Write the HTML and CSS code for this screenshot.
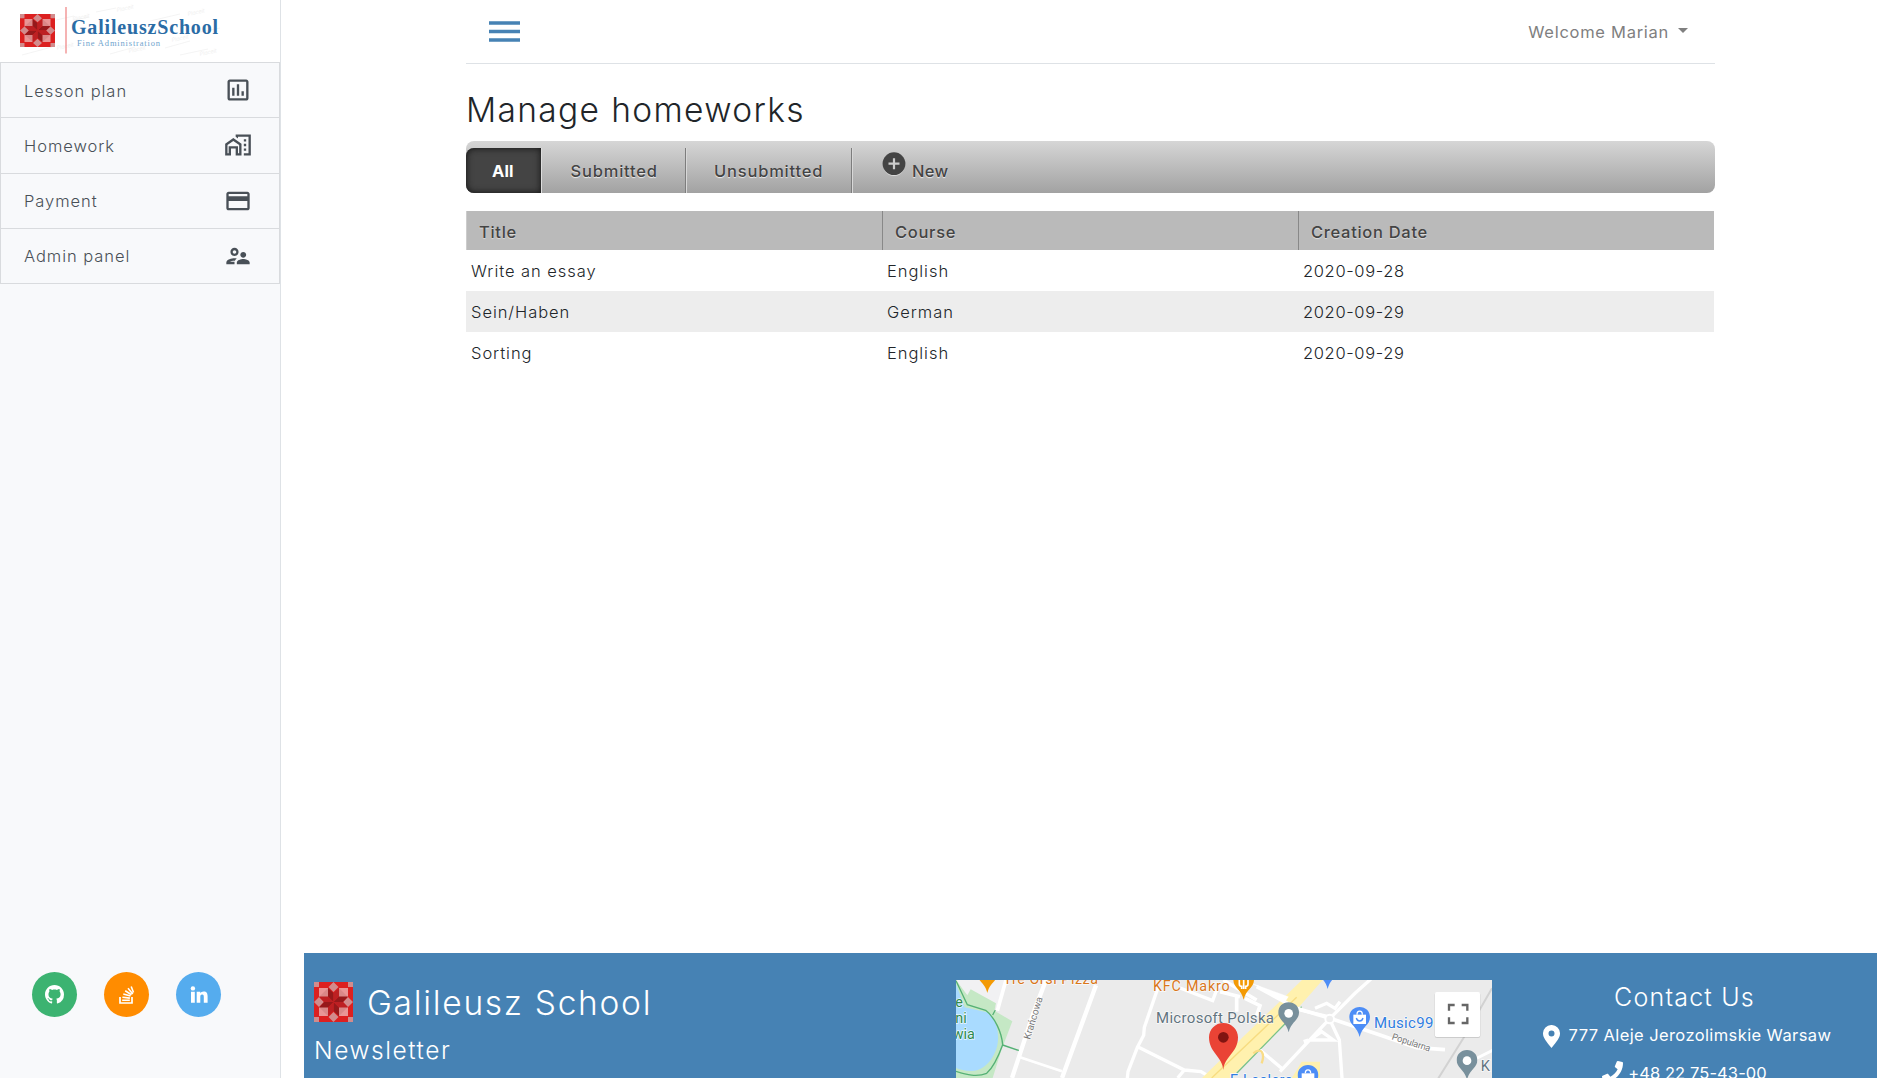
FILE: index.html
```html
<!DOCTYPE html>
<html lang="en">
<head>
<meta charset="utf-8">
<title>Galileusz School</title>
<link rel="stylesheet" href="styles.css">
</head>
<body>
<svg class="defs" width="0" height="0">
  <defs>
    <symbol id="emblem" viewBox="0 0 39 40" preserveAspectRatio="none">
      <rect width="39" height="40" fill="#dc2020"/>
      <g fill="#d28b8c">
        <path d="M0 0h5v5H0zM34 0h5v5h-5zM0 35h5v5H0zM34 35h5v5h-5z"/>
        <path d="M19.500 0l5 5-5 5-5-5zM19.500 30l5 5-5 5-5-5zM0 20l5-5 5 5-5 5zM29 20l5-5 5 5-5 5z"/>
      </g>
      <path d="M5 6h9v9H5zM25 6h9v9h-9zM5 25h9v9H5zM25 25h9v9h-9z" fill="#e99595"/>
      <path d="M5 15h9V6zM34 15h-9V6zM5 25h9v9zM34 25h-9v9z" fill="#d98787"/>
      <path d="M19.500 20L14 14.500V6l5.500 5zM19.500 20L25 14.500h9L29 20zM19.500 20l5.500 5.500V34l-5.500-5zM19.500 20L14 25.500H5l5-5.500z" fill="#96191b"/>
      <path d="M19.500 20L25 14.500V6l-5.500 5zM19.500 20l5.500 5.500h9L29 20zM19.500 20L14 25.500V34l5.500-5zM19.500 20L14 14.500H5l5 5.500z" fill="#bd2023"/>
    </symbol>
    <symbol id="pin" viewBox="0 0 64 92">
      <path d="M32 1C14 1 1 14 1 31c0 25 24 28 31 60 7-32 31-35 31-60C63 14 50 1 32 1z"/>
    </symbol>
  </defs>
</svg>
<div class="page">
  <aside class="sidebar">
    <a class="brand">
      <svg width="240" height="62" viewBox="0 0 240 62">
        <g stroke="#f1f1f1" stroke-width=".8">
          <path d="M56 20l18-4M96 12l20-4M150 21l30-7M22 55l30-8M110 54l25-7M165 48l25-7M180 55l28-6M74 20l15-3M200 32l20-4"/>
        </g>
        <g fill="#ececec" font-family="Inter, sans-serif" font-size="5.500" font-style="italic" letter-spacing="0">
          <text x="73" y="21" transform="rotate(-12 73 21)">Placeit</text>
          <text x="117" y="12" transform="rotate(-12 117 12)">Placeit</text>
          <text x="188" y="16" transform="rotate(-12 188 16)">Placeit</text>
          <text x="57" y="50" transform="rotate(-12 57 50)">Placeit</text>
          <text x="129" y="53" transform="rotate(-12 129 53)">Placeit</text>
          <text x="172" y="42" transform="rotate(-12 172 42)">Placeit</text>
          <text x="200" y="56" transform="rotate(-12 200 56)">Placeit</text>
        </g>
        <use href="#emblem" x="20" y="14" width="35" height="33"/>
        <path d="M66 7v46.500" stroke="#f08a8a" stroke-width="1.300"/>
        <text class="brand-name" x="71" y="34" textLength="147">GalileuszSchool</text>
        <text class="brand-sub" x="77" y="46" textLength="83">Fine Administration</text>
      </svg>
    </a>
    <nav class="menu">
      <a class="menu-item"><span>Lesson plan</span>
        <svg class="icon" viewBox="0 0 24 24"><path d="M9 17H7v-7h2zM13 17h-2V7h2zM17 17h-2v-4h2zM19 19H5V5h14zM19 3H5c-1.100 0-2 .9-2 2v14c0 1.100.9 2 2 2h14c1.100 0 2-.9 2-2V5c0-1.100-.9-2-2-2z" fill-rule="evenodd"/></svg></a>
      <a class="menu-item"><span>Homework</span>
        <svg class="icon" viewBox="0 0 24 24"><path d="M1 11v10h5v-6h4v6h5V11L8 6zm12 8h-1v-6H4v6H3v-7l5-3.500 5 3.500z"/><path d="M17 7h2v2h-2zM17 11h2v2h-2zM17 15h2v2h-2z"/><path d="M10 3v1.970l2 1.430V5h9v14h-4v2h6V3z"/></svg></a>
      <a class="menu-item"><span>Payment</span>
        <svg class="icon" viewBox="0 0 24 24"><path d="M20 4H4c-1.110 0-1.990.89-1.990 2L2 18c0 1.110.89 2 2 2h16c1.110 0 2-.89 2-2V6c0-1.110-.89-2-2-2zm0 14H4v-6h16v6zm0-10H4V6h16v2z"/></svg></a>
      <a class="menu-item"><span>Admin panel</span>
        <svg class="icon" viewBox="0 0 24 24"><path d="M9 12c1.930 0 3.500-1.570 3.500-3.500S10.930 5 9 5 5.500 6.570 5.500 8.500 7.070 12 9 12zm0-5c.83 0 1.500.67 1.500 1.500S9.830 10 9 10s-1.500-.67-1.500-1.500S8.170 7 9 7zm.05 10H4.770c.99-.5 2.700-1 4.230-1 .11 0 .23.010.34.010.34-.73.930-1.330 1.640-1.810-.73-.13-1.420-.2-1.980-.2-2.340 0-7 1.170-7 3.500V19h7v-1.500c0-.17.020-.34.050-.5zm7.450-2.500c-1.840 0-5.500 1.010-5.500 3V19h11v-1.500c0-1.990-3.660-3-5.500-3zm0-1c1.380 0 2.500-1.120 2.500-2.500s-1.120-2.500-2.500-2.500S14 9.620 14 11s1.120 2.500 2.500 2.500z"/></svg></a>
    </nav>
    <div class="social">
      <a class="round github"><svg width="19" height="19" viewBox="0 0 16 16"><path d="M8 0C3.580 0 0 3.580 0 8c0 3.540 2.290 6.530 5.470 7.590.4.070.55-.17.55-.38 0-.19-.01-.82-.01-1.490-2.010.37-2.530-.49-2.690-.94-.09-.23-.48-.94-.82-1.130-.28-.15-.68-.52-.01-.53.63-.01 1.080.58 1.230.82.72 1.210 1.870.87 2.330.66.070-.52.280-.87.510-1.070-1.780-.2-3.640-.89-3.640-3.950 0-.87.310-1.590.820-2.150-.08-.2-.36-1.020.080-2.120 0 0 .67-.21 2.200.82.640-.18 1.320-.27 2-.27.680 0 1.360.090 2 .27 1.530-1.040 2.200-.82 2.200-.82.440 1.100.160 1.920.080 2.120.510.560.820 1.270.820 2.150 0 3.070-1.870 3.750-3.650 3.950.290.250.540.730.540 1.480 0 1.070-.01 1.930-.01 2.200 0 .210.150.460.550.380A8.013 8.013 0 0016 8c0-4.420-3.580-8-8-8z"/></svg></a>
      <a class="round stack"><svg width="16" height="18" viewBox="0 0 16 18"><path d="M1 11v6h12v-6" fill="none" stroke="#fff" stroke-width="1.700"/><path d="M3.200 14.300h7.600M3.400 11.300l7.500.8M4.300 8l7.200 2M6.200 4.800l6.300 4M9 2.200l4.800 5.700M12.200.5l2.300 6" stroke="#fff" stroke-width="1.600" fill="none"/></svg></a>
      <a class="round linkedin"><svg width="18" height="18" viewBox="0 0 18 18"><circle cx="2.900" cy="2.400" r="2.200"/><path d="M1 5.700h3.800v11H1zM6.700 5.700h3.600v1.500c.6-1 1.700-1.800 3.300-1.800 3.200 0 4 2 4 4.900v6.400h-3.800v-5.500c0-1.300-.1-2.700-1.700-2.700s-1.800 1.300-1.800 2.700v5.500H6.700z"/></svg></a>
    </div>
  </aside>

  <div class="content">
    <main class="container">
      <header class="topbar">
        <svg width="31" height="22" viewBox="0 0 31 22"><path d="M0 2h31M0 10.500h31M0 19h31" stroke="#4682b4" stroke-width="3.600"/></svg>
        <a class="welcome">Welcome Marian<i class="caret"></i></a>
      </header>
      <h2 class="title">Manage homeworks</h2>
      <ul class="tabs">
        <li class="tab active">All</li>
        <li class="tab submitted">Submitted</li>
        <li class="tab unsubmitted">Unsubmitted</li>
        <li class="tab new"><svg width="24" height="24" viewBox="0 0 24 24"><circle cx="12" cy="13" r="11" fill="#ddd"/><circle cx="12" cy="11.700" r="11.400" fill="#444"/><path d="M6.500 11.700h11M12 6.200v11" stroke="#ccc" stroke-width="2.200"/></svg>New</li>
      </ul>
      <table class="grid">
        <thead><tr><th>Title</th><th>Course</th><th>Creation Date</th></tr></thead>
        <tbody>
          <tr><td>Write an essay</td><td>English</td><td class="date">2020-09-28</td></tr>
          <tr><td>Sein/Haben</td><td>German</td><td class="date">2020-09-29</td></tr>
          <tr><td>Sorting</td><td>English</td><td class="date">2020-09-29</td></tr>
        </tbody>
      </table>
    </main>

    <footer class="footer">
      <section class="about">
        <div class="school"><svg width="39" height="40"><use href="#emblem" width="39" height="40"/></svg><span>Galileusz School</span></div>
        <div class="newsletter">Newsletter</div>
      </section>
      <svg class="map" width="536" height="98" viewBox="0 0 1608 294" preserveAspectRatio="none">
        <rect width="1608" height="294" fill="#ebebeb"/>
        <g transform="translate(-48 -60)">
          <path d="M48 60H200L170 140 48 90z" fill="#f1f1f3"/>
          <path d="M48 60l34 46 10-18 76 42-5 22 54 32-34 90-25 80H48z" fill="#c5e8c5"/>
          <path d="M48 72l26 70 66 15c26 18 36 50 34 82-2 44-34 88-70 93-24 3-38-2-56-8z" fill="#a9dbff"/>
          <path d="M48 62l34 72 55 17c28 22 48 66 51 103-16 44-30 70-48 86-30 12-60 4-92-6M188 255l50 17M158 165l8-15" fill="none" stroke="#55b175" stroke-width="4"/>
          <g fill="none" stroke="#fff">
            <path d="M198 60l-26 92" stroke-width="11"/>
            <path d="M318 60L280 160 216 354M468 76L366 354" stroke-width="13"/>
            <path d="M240 292l126 42" stroke-width="8"/>
            <path d="M655 80l-42 122-2 24-18 34 140 70 50 5 30 18M593 260l-29 75-2 20M733 330l-20 24M720 84l98 38 8-22 14-30M850 60l100 60" stroke-width="10"/>
          </g>
          <path d="M1086 60h62L990 240 870 354H786l84-82 38-40z" fill="#fff1ae"/>
          <path d="M1070 112L815 354" stroke="#f7dc80" stroke-width="4"/>
          <path d="M1085 140l-35 36-160 164" stroke="#79c287" stroke-width="4" fill="none"/>
          <g transform="translate(840 0)">
            <path d="M245 305l55 0 0 50H215z" fill="#fff1ae"/>
            <g fill="none" stroke="#fff">
              <path d="M110 80l120 65 100 30 150 50 110 38 85 6M0 95l60 15M50 105v50M75 115l45 22-10 30" stroke-width="11"/>
              <path d="M95 70l110 40-10 15z" fill="#fff"/>
              <path d="M330 175L180 335M330 180l28 60 8 114M330 175l75-75 50-45M240 150l85 20M270 240l70 0-35-25zM265 240l-14 5M285 145l35-15 25 15 15-20M120 270l65 55" stroke-width="10"/>
              <path d="M760 300l60-30" stroke-width="9"/>
            </g>
            <circle cx="329" cy="177" r="13" fill="#eee" stroke="#fff" stroke-width="6"/>
            <path d="M816 85l-22 38-64 112-75 120" stroke="#d2d2d2" stroke-width="6" fill="none"/>
            <path d="M100 280c25-20 35 0 25 30" stroke="#f9dc86" stroke-width="7" fill="none"/>
          </g>
          <g class="place" font-family="Roboto, sans-serif">
            <g fill="#d9771b" font-size="43">
              <text x="190" y="73" textLength="284">Tre Orsi Pizza</text>
              <text x="639" y="94" textLength="230">KFC Makro</text>
            </g>
            <text x="648" y="190" font-size="45" fill="#62747f" textLength="354">Microsoft Polska</text>
            <g fill="#2e8a4d" font-size="43"><text x="46" y="142">e</text><text x="46" y="188">ni</text><text x="38" y="236">wia</text></g>
            <text x="270" y="240" font-size="30" fill="#777" transform="rotate(-73 270 240)" textLength="132">Krańcowa</text>
            <text x="1302" y="204" font-size="45" fill="#2f7de1" textLength="178">Music99</text>
            <text x="1354" y="238" font-size="28" fill="#777" transform="rotate(18 1354 238)" textLength="120">Popularna</text>
            <text x="870" y="374" font-size="43" fill="#2f7de1" textLength="187">E.Leclerc</text>
            <text x="1622" y="332" font-size="44" fill="#62747f">K</text>
          </g>
          <use href="#pin" x="157" y="8" width="64" height="92" fill="#f39a05" transform="translate(-47 0)"/>
          <use href="#pin" x="879" y="28" width="64" height="92" fill="#f39a05"/>
          <path d="M898 60v12q0 7 7 7v8M911 60v27M924 60v12q0 7-7 7v8" stroke="#fff" stroke-width="5" fill="none"/>
          <use href="#pin" x="1131" y="-4" width="64" height="92" fill="#4d8df6"/>
          <use href="#pin" x="1014" y="126" width="64" height="92" fill="#78909c"/><circle cx="1046" cy="160" r="13" fill="#fff"/>
          <use href="#pin" x="1227" y="140" width="64" height="92" fill="#4d8df6"/>
          <path d="M1240 164h38v28h-38z" fill="#fff"/><path d="M1251 164c0-14 16-14 16 0" stroke="#fff" stroke-width="4" fill="none"/><path d="M1249 174c3 12 17 12 20 0" stroke="#4d8df6" stroke-width="4" fill="none"/>
          <use href="#pin" x="1072" y="314" width="64" height="92" fill="#4d8df6"/>
          <path d="M1085 340h38v24h-38z" fill="#fff"/><path d="M1096 340c0-14 16-14 16 0" stroke="#fff" stroke-width="4" fill="none"/>
          <use href="#pin" x="1549" y="269" width="64" height="92" fill="#78909c"/><circle cx="1581" cy="302" r="13" fill="#fff"/>
          <path d="M850 330c-3-40-43-52-43-98 0-24 19-43 43-43s44 19 44 43c0 46-41 58-44 98z" fill="#ea4335"/><circle cx="850" cy="232" r="16" fill="#811411"/>
          <rect x="1484" y="98" width="137" height="136" rx="6" fill="#000" opacity=".13"/>
          <rect x="1485" y="96" width="135" height="135" rx="5" fill="#fff"/>
          <path d="M1527 152v-17h17M1565 135h17v17M1582 172v17h-17M1544 189h-17v-17" fill="none" stroke="#666" stroke-width="7"/>
        </g>
      </svg>
      <section class="contact">
        <h4>Contact Us</h4>
        <p class="address"><svg width="17" height="23" viewBox="0 0 17 23"><path fill-rule="evenodd" d="M8.500 0A8.300 8.300 0 0 0 0 8.500C0 13 3.500 16.500 8.500 23 13.500 16.500 17 13 17 8.500A8.300 8.300 0 0 0 8.500 0zm0 5.500a3 3 0 1 1 0 6 3 3 0 0 1 0-6z"/></svg><span>777 Aleje Jerozolimskie Warsaw</span></p>
        <p class="phone"><svg width="21" height="21" viewBox="0 0 512 512"><path d="M493.400 24.600l-104-24c-11.300-2.600-22.900 3.300-27.500 13.900l-48 112c-4.200 9.800-1.400 21.300 6.900 28l60.600 49.600c-36 76.700-98.900 140.500-177.200 177.200l-49.600-60.600c-6.800-8.300-18.200-11.100-28-6.900l-112 48C3.900 366.500-2 378.100.6 389.400l24 104C27.100 504.200 36.700 512 48 512c256.100 0 464-207.500 464-464 0-11.200-7.700-20.900-18.600-23.400z"/></svg><span>+48 22 75-43-00</span></p>
      </section>
    </footer>
  </div>
</div>
</body>
</html>
```
FILE: styles.css
```css
* { box-sizing: border-box; }
body {
  margin: 0;
  height: 100vh;
  overflow: hidden;
  background: #fff;
  color: #212529;
  font: 300 16.500px/24px Inter, "Open Sans", sans-serif;
  letter-spacing: .95px;
}
h2, h4, p, ul { margin: 0; padding: 0; }
svg { display: block; flex: none; }
.defs { display: none; }
.page { display: flex; height: 1078px; }

/* Sidebar */
.sidebar {
  display: flex;
  flex-direction: column;
  flex: none;
  width: 281px;
  border-right: 1px solid #dee2e6;
  background: #f8f9fb;
}
.brand { height: 62px; background: #fff; }
.brand-name { font: bold 20px "Liberation Serif", serif; letter-spacing: 0; fill: #2b6ca5; }
.brand-sub { font: 8.500px "Liberation Serif", serif; letter-spacing: 0; fill: #6fa3cd; }
.menu { border: 1px solid #d9dbde; border-bottom: 0; }
.menu-item {
  display: flex;
  align-items: center;
  justify-content: space-between;
  height: 55.250px;
  padding: 0 27px 0 23px;
  border-bottom: 1px solid #d9dbde;
  color: #495057;
  line-height: 26px;
}
.menu-item span { padding-top: 1px; }
.icon { width: 28px; height: 28px; fill: #495057; }
.social { display: flex; gap: 27px; margin: auto 0 61px 32px; }
.round {
  display: flex;
  align-items: center;
  justify-content: center;
  width: 45px;
  height: 45px;
  border-radius: 50%;
  fill: #fff;
}
.github { background: #3cb371; }
.stack { background: #ff8c00; }
.linkedin { background: #55acee; }

/* Main column */
.content { display: flex; flex: 1; flex-direction: column; justify-content: space-between; padding: 0 10px 0 23px; }
.container { width: 1249px; margin-left: 162px; }
.topbar {
  display: flex;
  align-items: center;
  justify-content: space-between;
  height: 64px;
  padding: 0 27px 0 23px;
  border-bottom: 1px solid #dee2e6;
}
.welcome { display: flex; align-items: center; color: #7f7f7f; font-weight: 400; letter-spacing: .72px; padding-top: 1px; }
.caret { margin: -3px 0 0 9px; border: 5.500px solid transparent; border-top-color: #7f7f7f; border-bottom: 0; }
.title { margin: 26px 0 11px; font-size: 33.500px; line-height: 40px; font-weight: 300; letter-spacing: 1.350px; }
.tabs {
  display: flex;
  height: 52px;
  padding-top: 7px;
  border-radius: 8px;
  background: linear-gradient(#d6d6d6, #a2a2a2);
  list-style: none;
}
.tab {
  display: flex;
  align-items: center;
  padding: 0 27px 0 28px;
  border-right: 1px solid #7d7d7d;
  box-shadow: 1px 0 #d8d8d8;
  color: #444;
  font-weight: 500;
  letter-spacing: .8px;
  text-shadow: 0 1px 1px #eee;
}
.active {
  width: 75px;
  padding: 0 0 0 26px;
  border: 0;
  border-radius: 8px 0 0 8px;
  background: #444;
  box-shadow: inset 0 0 7px #111, 1px 0 #ddd;
  color: #fff;
  font-weight: 700;
  letter-spacing: .1px;
  text-shadow: none;
}
.submitted { width: 145px; padding-left: 29.500px; }
.unsubmitted { width: 166px; }
.new { gap: 6px; border: 0; box-shadow: none; padding-left: 30px; letter-spacing: .3px; }
.new svg { margin-top: -14px; }
.grid { width: 1248px; margin-top: 18px; border-spacing: 0; table-layout: fixed; }
th {
  height: 39px;
  padding: 3px 0 0 12px;
  border-left: 1px solid #888;
  background: #bababa;
  color: #444;
  font-weight: 500;
  letter-spacing: .7px;
  text-align: left;
  text-shadow: 0 1px 1px #ddd;
}
th:first-child { border-left-color: #ccc; }
td { height: 41px; padding: 0 0 0 5px; }
.date { letter-spacing: .65px; }
tbody tr:nth-child(even) { background: #ededed; }

/* Footer */
.footer {
  display: grid;
  grid-template-columns: 652px 536px 385px;
  height: 125px;
  overflow: hidden;
  background: #4682b4;
  color: #fff;
}
.about { padding: 29px 0 0 10px; }
.school { display: flex; gap: 14px; height: 40px; font-size: 33.500px; line-height: 42px; letter-spacing: 1.7px; }
.newsletter { margin-top: 12px; font-size: 24.500px; line-height: 32px; font-weight: 300; letter-spacing: 1.550px; }
.map { margin-top: 27px; }
.place text { paint-order: stroke; stroke: #fff; stroke-width: 4px; stroke-opacity: .8; letter-spacing: 0; font-weight: 400; }
.contact { display: flex; flex-direction: column; align-items: center; padding-top: 29px; fill: #fff; font-weight: 400; }
.contact h4 { font-size: 25px; line-height: 30px; font-weight: 300; letter-spacing: 1.2px; }
.address { display: flex; gap: 9px; margin: 13px -2px 0 3px; height: 23px; line-height: 21px; letter-spacing: .4px; }
.phone { display: flex; gap: 5px; margin-top: 13px; line-height: 25px; letter-spacing: .1px; }
```
